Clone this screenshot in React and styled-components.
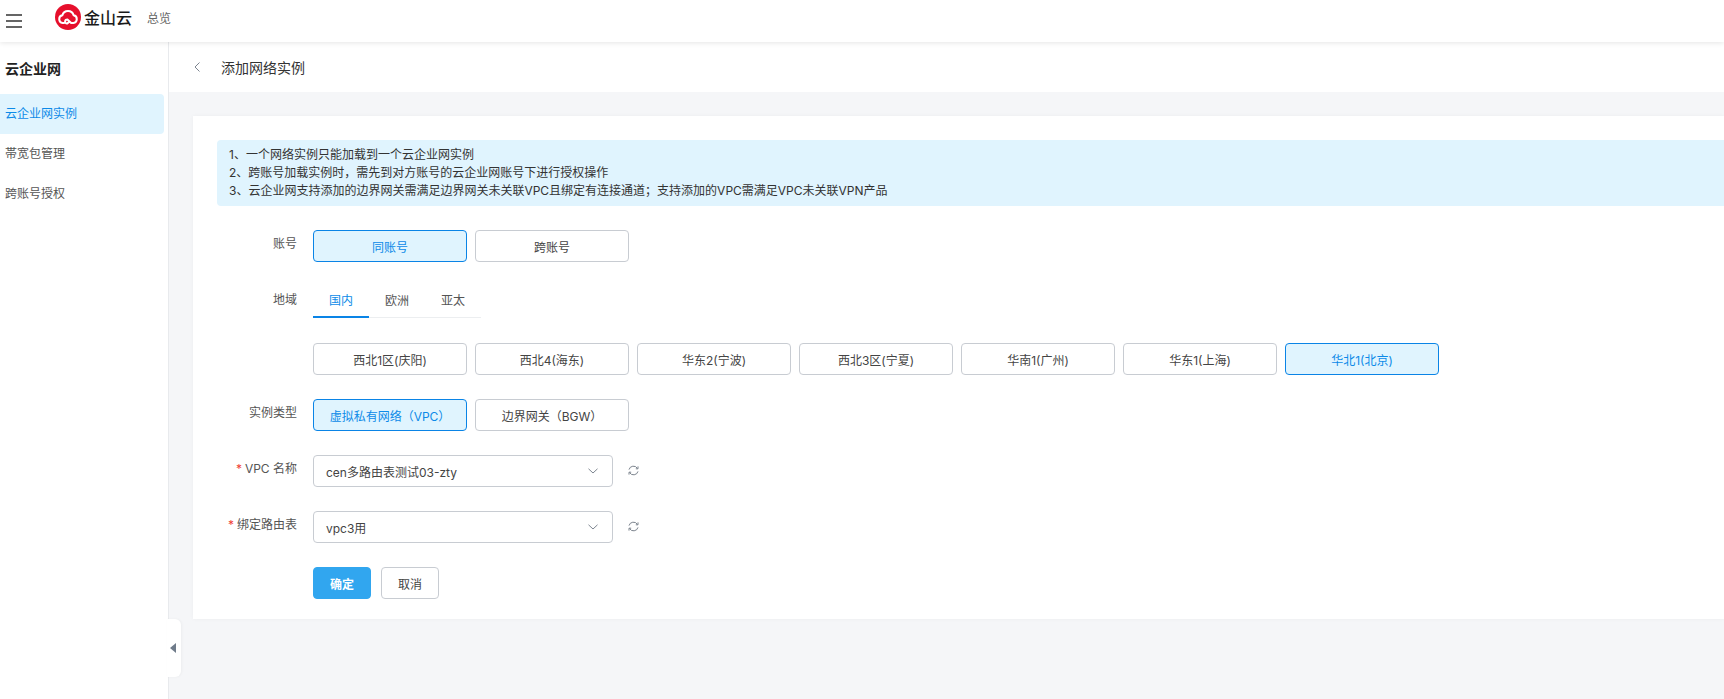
import React from "react";
import styled, { createGlobalStyle } from "styled-components";

const GlobalStyle = createGlobalStyle`
  html, body {
    margin: 0;
    padding: 0;
    height: 100%;
    overflow: hidden;
    background: #f5f6f8;
  }
  body {
    font-family: "Inter", "Noto Sans CJK SC", sans-serif;
    font-size: 12px;
    color: #444;
  }
  * {
    box-sizing: border-box;
  }
`;

const Page = styled.div`
  display: flex;
  flex-direction: column;
  height: 699px;
  width: 1724px;
  overflow: hidden;
`;

const TopBar = styled.header`
  display: flex;
  align-items: center;
  flex: 0 0 42px;
  height: 42px;
  padding-left: 6px;
  background: #fff;
  box-shadow: 0 1px 5px rgba(0, 0, 0, 0.1);
  position: relative;
  z-index: 2;
`;

const MenuIcon = styled.svg`
  width: 16px;
  height: 14px;
  margin-right: 33px;
  margin-top: -1px;
`;

const Logo = styled.div`
  display: flex;
  align-items: center;
  gap: 3px;
  width: 92px;
  margin-top: -8px;
`;

const LogoText = styled.span`
  font-family: "Noto Sans CJK SC", sans-serif;
  font-size: 16px;
  font-weight: 500;
  color: #1a1a1a;
  line-height: 20px;
`;

const TopLink = styled.span`
  color: #666;
  font-size: 12px;
  margin-top: -8px;
`;

const Body = styled.div`
  display: flex;
  flex: 1;
  min-height: 0;
`;

const Sidebar = styled.aside`
  flex: 0 0 169px;
  background: #fff;
  border-right: 1px solid #e8eaed;
  position: relative;
`;

const SideTitle = styled.h2`
  margin: 0;
  height: 52px;
  padding-left: 5px;
  display: flex;
  align-items: center;
  font-size: 14px;
  font-weight: 600;
  color: #222;
`;

const SideNav = styled.nav`
  display: flex;
  flex-direction: column;
  width: 164px;
`;

const SideItem = styled.a`
  height: 40px;
  line-height: 40px;
  padding-left: 5px;
  border-radius: 0 4px 4px 0;
  font-size: 12px;
  color: ${(props) => (props.$active ? "#0c8ae8" : "#555")};
  background: ${(props) => (props.$active ? "#e0f4fe" : "transparent")};
`;

const CollapseHandle = styled.div`
  position: absolute;
  left: 167px;
  top: 577px;
  width: 14px;
  height: 58px;
  display: flex;
  align-items: center;
  padding-left: 3px;
  background: #fff;
  border-radius: 0 6px 6px 0;
  box-shadow: 1px 0 3px rgba(0, 0, 0, 0.04);
  &::before {
    content: "";
    border-style: solid;
    border-width: 5px 6px 5px 0;
    border-color: transparent #6f7b8a transparent transparent;
  }
`;

const Content = styled.main`
  flex: 1;
  min-width: 0;
`;

const PageHead = styled.div`
  display: flex;
  align-items: center;
  height: 50px;
  padding-left: 25px;
  background: #fff;
  margin-bottom: 24px;
`;

const BackIcon = styled.svg`
  width: 6px;
  height: 10px;
  margin-right: 21px;
`;

const PageTitle = styled.h1`
  margin: 0;
  font-size: 14px;
  font-weight: 400;
  color: #333;
`;

const Card = styled.section`
  margin-left: 24px;
  padding: 24px 0 20px 24px;
  background: #fff;
  box-shadow: 0 0 4px rgba(0, 0, 0, 0.04);
`;

const Notice = styled.div`
  padding: 6px 12px;
  margin-bottom: 24px;
  background: #e0f4fe;
  border-radius: 4px 0 0 4px;
  line-height: 18px;
  font-size: 12px;
  color: #333;
`;

const FormRow = styled.div`
  display: flex;
  align-items: flex-start;
  margin-bottom: ${(props) => props.$gap ?? 24}px;
`;

const Label = styled.label`
  flex: 0 0 80px;
  margin-right: 16px;
  line-height: 28px;
  text-align: right;
  color: #555;
  white-space: nowrap;
`;

const Star = styled.span`
  color: #f04134;
  margin-right: 3px;
`;

const OptionGroup = styled.div`
  display: flex;
  gap: 8px;
`;

const Option = styled.button`
  width: 154px;
  height: 32px;
  padding: 0;
  font: inherit;
  border-radius: 4px;
  border: 1px solid ${(props) => (props.$active ? "#0a84e6" : "#c8ccd2")};
  color: ${(props) => (props.$active ? "#0c8ae8" : "#444")};
  background: ${(props) => (props.$active ? "#e0f4fe" : "#fff")};
`;

const Tabs = styled.div`
  display: flex;
  width: 168px;
  height: 32px;
  border-bottom: 1px solid #eceef0;
`;

const Tab = styled.div`
  width: 56px;
  height: 32px;
  line-height: 30px;
  text-align: center;
  color: ${(props) => (props.$active ? "#0c8ae8" : "#555")};
  border-bottom: 2px solid ${(props) => (props.$active ? "#0a84e6" : "transparent")};
`;

const Select = styled.div`
  display: flex;
  align-items: center;
  justify-content: space-between;
  width: 300px;
  height: 32px;
  padding: 0 14px 0 12px;
  border: 1px solid #c8ccd2;
  border-radius: 4px;
  color: #444;
  background: #fff;
`;

const RefreshIcon = styled.svg`
  width: 11px;
  height: 11px;
  margin: 10px 0 0 15px;
`;

const Actions = styled.div`
  display: flex;
  gap: 10px;
  margin-left: 96px;
`;

const ActionButton = styled.button`
  width: 58px;
  height: 32px;
  padding: 0;
  font: inherit;
  font-weight: ${(props) => (props.$primary ? 600 : 400)};
  border-radius: 4px;
  border: 1px solid ${(props) => (props.$primary ? "#31a6ef" : "#c8ccd2")};
  color: ${(props) => (props.$primary ? "#fff" : "#444")};
  background: ${(props) => (props.$primary ? "#31a6ef" : "#fff")};
`;

const Chevron = () => (
  <svg width="10" height="6" viewBox="0 0 10 6" fill="none">
    <path d="M0.5 0.8 L5 5 L9.5 0.8" stroke="#7d8590" strokeWidth="1" />
  </svg>
);

const Refresh = () => (
  <RefreshIcon viewBox="0 0 11 11" fill="none" stroke="#7b838d" strokeWidth="1">
    <path d="M1 4.6 A4.6 4.6 0 0 1 9.4 3.4" />
    <path d="M10 6.4 A4.6 4.6 0 0 1 1.6 7.6" />
    <path d="M10 1.4 V3.8 H7.8" />
    <path d="M1 9.6 V7.2 H3.2" />
  </RefreshIcon>
);

const CloudLogo = () => (
  <svg width="26" height="26" viewBox="0 0 26 26">
    <circle cx="13" cy="13" r="13" fill="#e60f2c" />
    <path
      d="M9 19 H7.6 A3.9 3.9 0 0 1 7.4 11.3 A5.8 5.8 0 0 1 18.6 11.3 A3.9 3.9 0 0 1 18.4 19 H16.2 L12.4 15.4 A1.7 1.7 0 1 0 12 19.6 L14 18"
      fill="none"
      stroke="#fff"
      strokeWidth="2"
      strokeLinecap="round"
      strokeLinejoin="round"
    />
  </svg>
);

const regions = ["西北1区(庆阳)", "西北4(海东)", "华东2(宁波)", "西北3区(宁夏)", "华南1(广州)", "华东1(上海)", "华北1(北京)"];

export default function App() {
  return (
    <Page>
      <GlobalStyle />
      <TopBar>
        <MenuIcon viewBox="0 0 16 14" stroke="#333" strokeWidth="1.4">
          <path d="M0 1 H16 M0 7 H16 M0 13 H16" />
        </MenuIcon>
        <Logo>
          <CloudLogo />
          <LogoText>金山云</LogoText>
        </Logo>
        <TopLink>总览</TopLink>
      </TopBar>
      <Body>
        <Sidebar>
          <SideTitle>云企业网</SideTitle>
          <SideNav>
            <SideItem $active>云企业网实例</SideItem>
            <SideItem>帯宽包管理</SideItem>
            <SideItem>跨账号授权</SideItem>
          </SideNav>
          <CollapseHandle />
        </Sidebar>
        <Content>
          <PageHead>
            <BackIcon viewBox="0 0 6 10" fill="none" stroke="#7d8590">
              <path d="M5.5 0.5 L1 5 L5.5 9.5" />
            </BackIcon>
            <PageTitle>添加网络实例</PageTitle>
          </PageHead>
          <Card>
            <Notice>
              <div>1、一个网络实例只能加载到一个云企业网实例</div>
              <div>2、跨账号加载实例时，需先到对方账号的云企业网账号下进行授权操作</div>
              <div>3、云企业网支持添加的边界网关需满足边界网关未关联VPC且绑定有连接通道；支持添加的VPC需满足VPC未关联VPN产品</div>
            </Notice>
            <FormRow>
              <Label>账号</Label>
              <OptionGroup>
                <Option $active>同账号</Option>
                <Option>跨账号</Option>
              </OptionGroup>
            </FormRow>
            <FormRow $gap={25}>
              <Label>地域</Label>
              <Tabs>
                <Tab $active>国内</Tab>
                <Tab>欧洲</Tab>
                <Tab>亚太</Tab>
              </Tabs>
            </FormRow>
            <FormRow>
              <Label />
              <OptionGroup>
                {regions.map((name) => (
                  <Option key={name} $active={name === "华北1(北京)"}>
                    {name}
                  </Option>
                ))}
              </OptionGroup>
            </FormRow>
            <FormRow>
              <Label>实例类型</Label>
              <OptionGroup>
                <Option $active>虚拟私有网络（VPC）</Option>
                <Option>边界网关（BGW）</Option>
              </OptionGroup>
            </FormRow>
            <FormRow>
              <Label>
                <Star>*</Star>VPC 名称
              </Label>
              <Select>
                cen多路由表测试03-zty
                <Chevron />
              </Select>
              <Refresh />
            </FormRow>
            <FormRow>
              <Label>
                <Star>*</Star>绑定路由表
              </Label>
              <Select>
                vpc3用
                <Chevron />
              </Select>
              <Refresh />
            </FormRow>
            <Actions>
              <ActionButton $primary>确定</ActionButton>
              <ActionButton>取消</ActionButton>
            </Actions>
          </Card>
        </Content>
      </Body>
    </Page>
  );
}
